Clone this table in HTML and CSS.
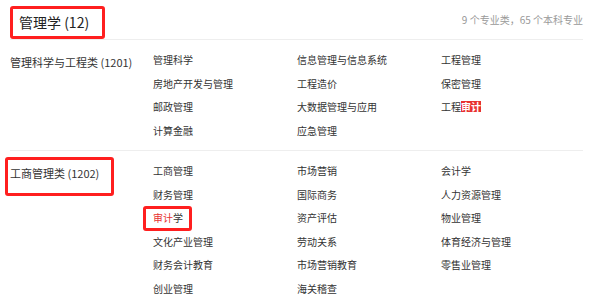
FILE: index.html
```html
<!DOCTYPE html>
<html lang="zh-CN">
<head>
<meta charset="utf-8">
<title>管理学</title>
<link rel="stylesheet" href="styles.css">
</head>
<body>
<div class="wrap">
  <div class="header">
    <span class="title marked">管理学 (12)</span>
    <span class="summary">9 个专业类，65 个本科专业</span>
  </div>

  <div class="section">
    <div class="cat"><span class="cat-name">管理科学与工程类 (1201)</span></div>
    <div class="items">
      <span class="item">管理科学</span>
      <span class="item">信息管理与信息系统</span>
      <span class="item">工程管理</span>
      <span class="item">房地产开发与管理</span>
      <span class="item">工程造价</span>
      <span class="item">保密管理</span>
      <span class="item">邮政管理</span>
      <span class="item">大数据管理与应用</span>
      <span class="item">工程<span class="hl">审计</span></span>
      <span class="item">计算金融</span>
      <span class="item">应急管理</span>
    </div>
  </div>

  <div class="section">
    <div class="cat"><span class="cat-name marked marked-cat">工商管理类 (1202)</span></div>
    <div class="items">
      <span class="item">工商管理</span>
      <span class="item">市场营销</span>
      <span class="item">会计学</span>
      <span class="item">财务管理</span>
      <span class="item">国际商务</span>
      <span class="item">人力资源管理</span>
      <span class="item"><span class="marked marked-item"><span class="red">审计</span>学</span></span>
      <span class="item">资产评估</span>
      <span class="item">物业管理</span>
      <span class="item">文化产业管理</span>
      <span class="item">劳动关系</span>
      <span class="item">体育经济与管理</span>
      <span class="item">财务会计教育</span>
      <span class="item">市场营销教育</span>
      <span class="item">零售业管理</span>
      <span class="item">创业管理</span>
      <span class="item">海关稽查</span>
    </div>
  </div>
</div>
</body>
</html>
```

FILE: styles.css
```css
* { box-sizing: border-box; }
html, body { margin: 0; padding: 0; background: #fff; }
body {
  font-family: "Noto Sans CJK SC", "Microsoft YaHei", sans-serif;
  color: #333;
}
.wrap {
  width: 583px;
  padding-left: 10px;
}
.header {
  display: flex;
  justify-content: space-between;
  align-items: center;
  height: 40px;
  padding-top: 4px;
  border-bottom: 1px solid #eeeeee;
}
.title {
  font-size: 14px;
  line-height: 20px;
  margin-left: 9px;
  color: #222;
}
.summary {
  font-size: 10px;
  line-height: 14px;
  color: #999;
  margin-top: -4px;
}
.section {
  display: flex;
  padding: 8px 0 8px 0;
  border-bottom: 1px solid #eeeeee;
}
.cat {
  width: 143px;
  flex: none;
}
.cat-name {
  font-size: 11px;
  line-height: 23.5px;
  color: #333;
  display: inline-block;
}
.items {
  display: grid;
  grid-template-columns: 144px 144px 142px;
  grid-auto-rows: 23.5px;
}
.item {
  font-size: 10px;
  line-height: 23.5px;
  color: #333;
  white-space: nowrap;
}
.hl {
  display: inline-block;
  background: #e8312f;
  color: #fff;
  font-weight: bold;
  line-height: 11px;
  padding: 0 0;
}
.red { color: #e8312f; }
.marked { position: relative; }
.marked::after {
  content: "";
  position: absolute;
  top: -6px;
  bottom: -7px;
  left: -9px;
  right: -16px;
  border: 3px solid #ff1f1f;
  border-radius: 3px;
  pointer-events: none;
}
.marked-cat::after {
  top: -5px;
  bottom: -10px;
  left: -5px;
  right: -15px;
}
.marked-item { display: inline-block; }
.marked-item::after {
  top: 0px;
  bottom: -1px;
  left: -10px;
  right: -9px;
}
```
